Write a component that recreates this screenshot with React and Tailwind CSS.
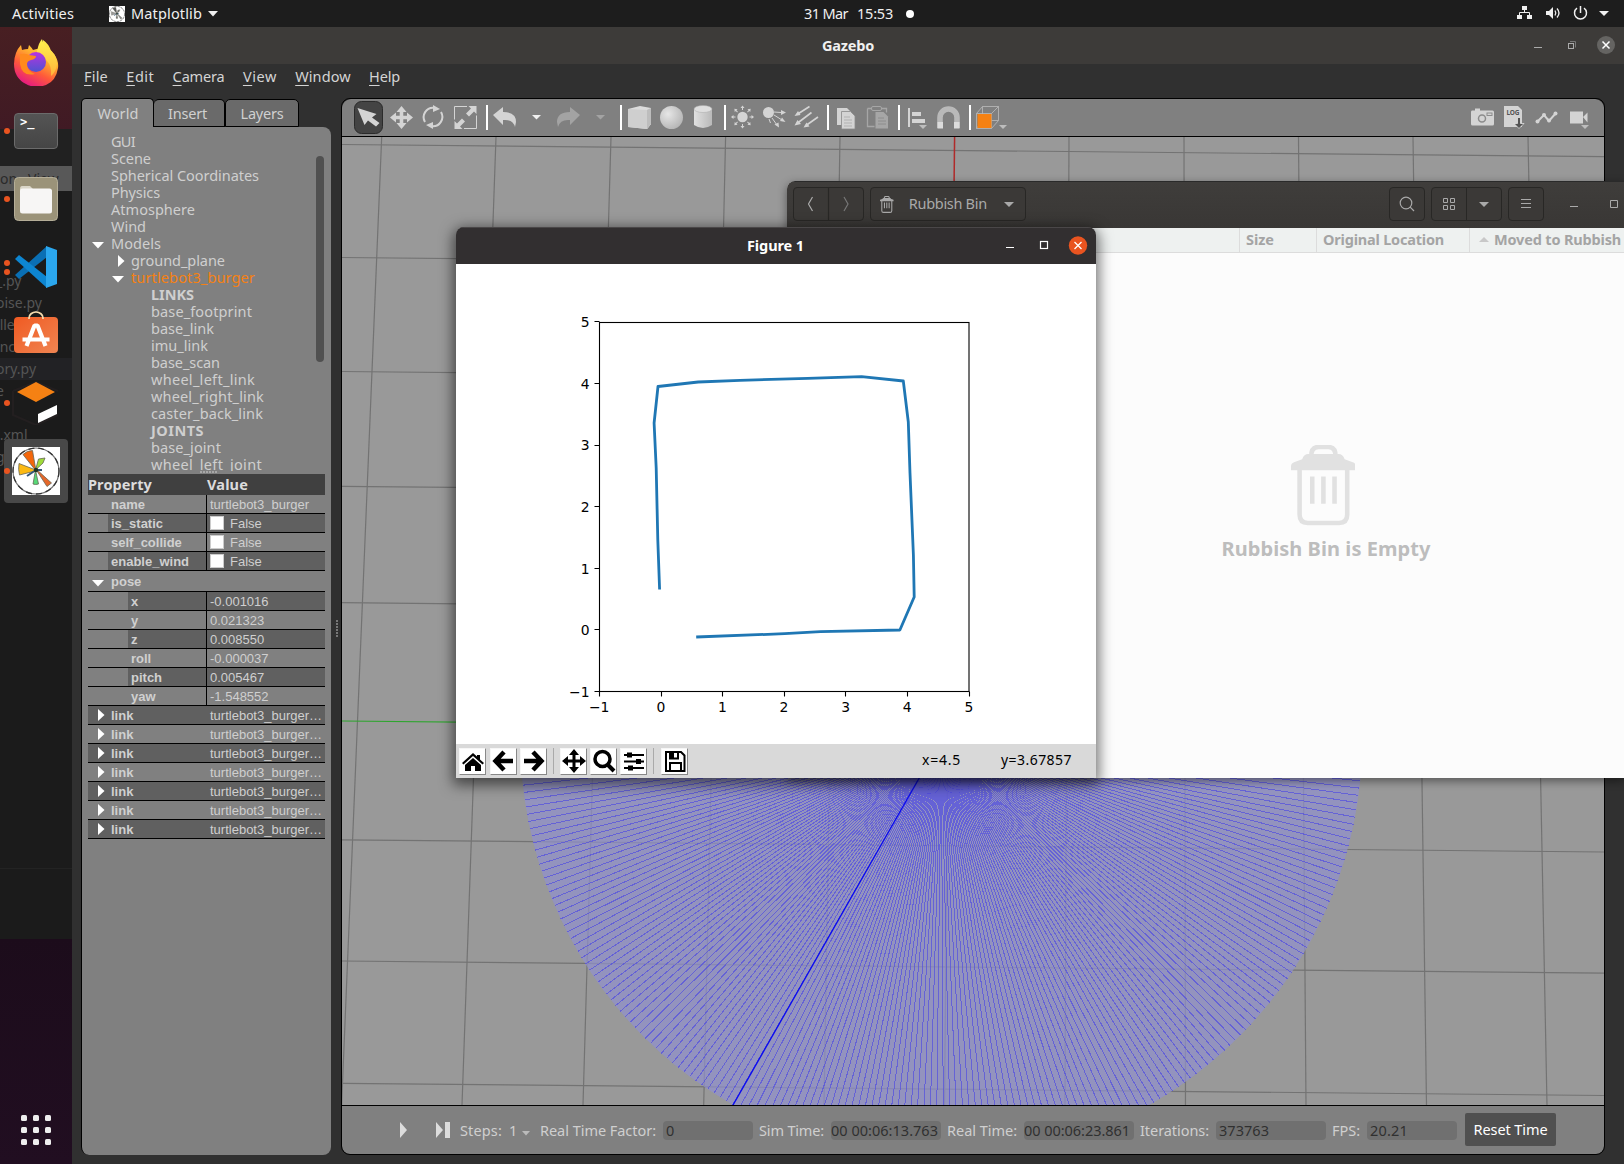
import React, { useLayoutEffect, useRef, useState } from "react";

const UI = "font-['Noto_Sans',sans-serif]";

/* Text whose letter spacing is tuned so that it fills exactly w pixels. */
function Fit({ w, className = "", children }) {
  const ref = useRef(null);
  const [ls, setLs] = useState(0);
  useLayoutEffect(() => {
    const n = ref.current.textContent.length;
    const natural = ref.current.getBoundingClientRect().width - ls * n;
    setLs((w - natural) / n);
  }, [w]);
  return (
    <span ref={ref} className={"inline-block shrink-0 whitespace-pre " + className} style={{ letterSpacing: ls + "px" }}>
      {children}
    </span>
  );
}

/* ---------- top bar ---------- */
function MplWheel({ mono }) {
  const c = mono ? ["#555", "#777", "#888", "#666", "#999"] : ["#f4670b", "#9fdb3a", "#e5672a", "#57d977", "#fcb913"];
  return (
    <g>
      <rect width="48" height="48" fill="#fff" />
      <circle cx="24" cy="24" r="23" fill="#fff" stroke="#777" strokeWidth="1.2" />
      <circle cx="24" cy="24" r="23" fill="none" stroke="#333" strokeWidth="1.3" strokeDasharray="6 4" />
      <path d="M24 24L11 7.500q4-4 9.500-4z" fill={c[0]} stroke="#665" strokeWidth=".8" />
      <path d="M23.500 23L26.500 12l6.500-1-2 5z" fill={c[1]} stroke="#665" strokeWidth=".8" />
      <path d="M23 21L39.500 36l-4.500 3.500z" fill={c[2]} stroke="#665" strokeWidth=".8" />
      <path d="M23.500 23L26.500 37q-3 1-5.500 0z" fill={c[3]} stroke="#665" strokeWidth=".8" />
      <path d="M25 23.500L7 16.500q-1 6 .5 11.500z" fill={c[4]} stroke="#665" strokeWidth=".8" />
      <path d="M24 23l-9 6M24 23l6 0" stroke="#357" strokeWidth="2" />
      <circle cx="24" cy="23" r="2.200" fill="#232" />
    </g>
  );
}

function TopBar() {
  return (
    <div className="h-[27px] shrink-0 bg-[#1d1d1d] flex items-center text-[14.5px] leading-[27px] text-[#f0f0f0]">
      <div className="w-[109px] pl-[12px]"><Fit w={62}>Activities</Fit></div>
      <svg width="16" height="16" viewBox="0 0 48 48"><MplWheel mono /></svg>
      <Fit w={71} className="ml-[6px]">Matplotlib</Fit>
      <svg width="10" height="6" className="ml-[6px]"><path d="M0 0h10L5 5.5z" fill="#f0f0f0" /></svg>
      <div className="ml-[586px] w-[106px] flex items-center">
        <Fit w={44}>31 Mar</Fit><Fit w={36} className="ml-[9px]">15:53</Fit>
        <span className="ml-[13px] size-[8px] shrink-0 rounded-full bg-white" />
      </div>
      <svg width="100" height="27" viewBox="1516 0 100 27" className="ml-auto mr-[8px]" fill="#f0f0f0">
        <path d="M1522 6h5v4h-5zM1517 15h5v4h-5zM1527 15h5v4h-5z" />
        <path d="M1524.500 10v3M1519.500 15v-2.500h10v2.500" fill="none" stroke="#f0f0f0" />
        <path d="M1546 11h3l4-4v12l-4-4h-3z" />
        <path d="M1555 10.500q1.600 2.500 0 5M1557 8.500q4 4.500 0 9" fill="none" stroke="#f0f0f0" strokeWidth="1.300" />
        <path d="M1580.500 6v7M1577 8.200a6 6 0 1 0 7 0" fill="none" stroke="#f0f0f0" strokeWidth="1.500" />
        <path d="M1599 11h10l-5 5z" />
      </svg>
    </div>
  );
}

/* ---------- dock ---------- */
function Firefox() {
  return (
    <svg width="48" height="50" viewBox="0 0 48 50">
      <defs>
        <linearGradient id="ffa" x1=".8" y1=".05" x2=".3" y2="1"><stop offset="0" stopColor="#fff44f" /><stop offset=".35" stopColor="#ffb02e" /><stop offset=".65" stopColor="#ff5a3a" /><stop offset="1" stopColor="#e31587" /></linearGradient>
        <linearGradient id="ffb" x1=".5" y1="0" x2=".5" y2="1"><stop offset="0" stopColor="#b833e1" /><stop offset="1" stopColor="#4f53d0" /></linearGradient>
        <linearGradient id="ffc" x1="0" y1="0" x2="0" y2="1"><stop offset="0" stopColor="#fff44f" /><stop offset="1" stopColor="#ffb43a" /></linearGradient>
      </defs>
      <path d="M4 17q2-5 5-8l1 5q3-1 6-1l1-4q3 3 4 5 6-2 9-1 0-5 1-9 6 4 8 11l3 3q5 7 4 14-2 13-12 17-11 4-20-1Q2 42 2 28q0-6 2-11z" fill="url(#ffa)" />
      <path d="M25 15q2-9 5-12 1 6 6 9 9 6 9 16-1 8-6 12 1-10-4-15-4-6-10-8z" fill="url(#ffc)" />
      <circle cx="24" cy="26" r="10" fill="url(#ffb)" />
      <path d="M8 18q6-1 9 1l7 1q0 3-5 4-4 1-4 4 0 7 8 10Q10 41 8 28z" fill="#ff8a1e" />
    </svg>
  );
}

function DockItem({ h, dots = 0, children }) {
  return (
    <div className={"shrink-0 flex items-center " + h}>
      <div className="w-[12px] flex flex-col items-end gap-[3px]">
        {Array.from({ length: dots }).map((_, i) => <span key={i} className="size-[6px] rounded-full bg-[#e95420] mr-[2px]" />)}
      </div>
      <div className="w-[48px] flex justify-center">{children}</div>
    </div>
  );
}

function Dock() {
  const ghost = "whitespace-pre text-[14px] text-[#555] leading-[22px] h-[22px] -indent-[4px]";
  return (
    <div className="relative w-[72px] shrink-0 h-full bg-[#1b1b1b] overflow-hidden">
      <div className="absolute inset-0 flex flex-col">
        <div className="h-[102px] shrink-0 bg-linear-to-b from-[#481f22] to-[#401a24]" />
        <div className="h-[37px] shrink-0 bg-[#212121]" />
        <div className="h-[25px] shrink-0 bg-[#585858] text-[#2a2a2a] text-[14px] leading-[25px] whitespace-pre">on   View</div>
        <div className="h-[79px] shrink-0" />
        <div className={ghost}>_.py</div>
        <div className={ghost}>oise.py</div>
        <div className={ghost}> ller</div>
        <div className={ghost}> nce</div>
        <div className={ghost + " bg-[#222225]"}>ory.py</div>
        <div className={ghost}>e</div>
        <div className={ghost} />
        <div className={ghost}> .xml</div>
        <div className={ghost}>g</div>
        <div className="h-[401px] shrink-0 border-b border-[#232323]" />
        <div className="h-[70px] shrink-0" />
        <div className="flex-1 bg-linear-to-b from-[#1c0c1b] to-[#210e21]" />
      </div>
      <div className="absolute left-[4px] top-[412px] w-[64px] h-[64px] rounded-[4px] bg-[#484848]" />
      <div className="relative h-full flex flex-col">
        <DockItem h="h-[70px] pb-[3px]"><Firefox /></DockItem>
        <DockItem h="h-[68px]" dots={1}>
          <div className="w-[44px] h-[36px] rounded-[4px] bg-linear-to-b from-[#545454] to-[#454545] border border-[#6b6b6b] font-['DejaVu_Sans_Mono',monospace] font-bold text-[12px] leading-[17px] text-white pl-[5px]">&gt;_</div>
        </DockItem>
        <DockItem h="h-[68px]" dots={1}>
          <svg width="44" height="44"><rect x=".5" y=".5" width="43" height="43" rx="4" fill="#9b9379" stroke="#b5ae98" /><path d="M6 12q0-3 2-3h8l3 3h16v8H6z" fill="#dad6c8" /><rect x="6" y="11.500" width="32" height="25" rx="2.500" fill="#f7f6f5" /></svg>
        </DockItem>
        <DockItem h="h-[68px]" dots={2}>
          <svg width="44" height="44" viewBox="0 0 44 44"><path d="M1 30l4 4L33 12V1z" fill="#0a6fb4" /><path d="M1 14l4-4 28 22v11z" fill="#0d86d2" /><path d="M32 1l11 4v34l-11 4z" fill="#2ba7ee" /></svg>
        </DockItem>
        <DockItem h="h-[68px] pb-[7px]">
          <svg width="44" height="44" viewBox="0 0 44 44"><defs><linearGradient id="swg" x1="0" y1="0" x2="1" y2="1"><stop offset="0" stopColor="#f05a22" /><stop offset="1" stopColor="#f08552" /></linearGradient></defs><rect y="7" width="44" height="36" rx="4" fill="url(#swg)" /><path d="M15 9V8a7 6 0 0 1 14 0v1" fill="none" stroke="#f6dcae" strokeWidth="1.700" /><path d="M12.500 36l8-20.500h3l8 20.500M8.500 29.500h27" fill="none" stroke="#fff" strokeWidth="4.200" strokeLinejoin="bevel" /></svg>
        </DockItem>
        <DockItem h="h-[68px]" dots={1}>
          <svg width="48" height="44" viewBox="0 0 48 44"><path d="M1 10L24 1l22 9M1 10v24l23 10 22-10" fill="none" stroke="#231f20" strokeWidth="2" /><path d="M24 1l19 10-19 10L5 11z" fill="#f58113" /><path d="M26 33l19-9v9L26 42z" fill="#fff" /></svg>
        </DockItem>
        <DockItem h="h-[68px]" dots={1}>
          <svg width="48" height="48"><MplWheel /></svg>
        </DockItem>
        <div className="mt-auto mb-[19px] ml-[21px] grid grid-cols-3 gap-[6px] w-[30px]">
          {Array.from({ length: 9 }).map((_, i) => <span key={i} className="size-[6px] rounded-[1.5px] bg-[#eee]" />)}
        </div>
      </div>
    </div>
  );
}

/* ---------- left panel ---------- */
const tree = [
  [0, "GUI", 24], [0, "Scene", 40], [0, "Spherical Coordinates", 148], [0, "Physics", 49], [0, "Atmosphere", 84], [0, "Wind", 35],
  [0, "Models", 50, "open"], [1, "ground_plane", 94, "closed"], [1, "turtlebot3_burger", 124, "open", true],
  [2, "LINKS", 43], [2, "base_footprint", 101], [2, "base_link", 63], [2, "imu_link", 57], [2, "base_scan", 69],
  [2, "wheel_left_link", 104], [2, "wheel_right_link", 113], [2, "caster_back_link", 112], [2, "JOINTS", 53],
  [2, "base_joint", 70], [2, "wheel_left_joint", 111],
];
const indent = ["w-[29px]", "w-[49px]", "w-[69px]"];

function Tri({ dir }) {
  return dir === "open"
    ? <svg width="12" height="7"><path d="M0 0h12L6 6.500z" fill="#fff" /></svg>
    : <svg width="7" height="12"><path d="M0 0v12l6.500-6z" fill="#fff" /></svg>;
}

function Row({ name, value, lvl = 1, dark, check, arrow, pose }) {
  const bg = dark ? "bg-[#606060]" : "";
  const pad = arrow ? "w-0" : lvl === 1 ? "w-[20px]" : "w-[40px]";
  return (
    <div className={"shrink-0 flex border-b border-black text-[13px] " + (pose ? "h-[21px] leading-[20px]" : "h-[19px] leading-[19px]")}>
      <div className={"shrink-0 " + pad} />
      <div className={"flex-1 flex " + bg}>
        <div className={"flex-1 font-bold text-[#d0d0d0] flex items-center " + (!arrow ? "border-r border-black" : "")}>
          {arrow && <span className={"w-[23px] shrink-0 flex " + (pose ? "pl-[4px] pt-[4px]" : "pl-[10px]")}><Tri dir={arrow} /></span>}
          <span className={arrow ? (pose ? "pt-[1px]" : "") : "pl-[3px]"}>{name}</span>
        </div>
        <div className="w-[118px] shrink-0 flex items-center text-[#cfcfcf] pl-[3px]">
          {check && <span className="size-[14px] bg-white border border-[#ccc] mr-[6px]" />}
          {value}
        </div>
      </div>
    </div>
  );
}

function LeftPanel() {
  return (
    <div className="w-[250px] shrink-0 flex flex-col">
      <div className="h-[29px] shrink-0 flex items-end text-[14.5px] text-[#d0d0d0] text-center">
        <div className="w-[73px] h-[29px] rounded-t-[5px] bg-[#808080] border-t border-l border-r border-black leading-[29px] pl-[1px]"><Fit w={41}>World</Fit></div>
        <div className="w-[71px] h-[28px] rounded-t-[5px] bg-[#6a6a6a] border-t border-r border-b border-black leading-[27px] pr-[3px]"><Fit w={39}>Insert</Fit></div>
        <div className="w-[74px] h-[28px] rounded-t-[5px] bg-[#6a6a6a] border border-black leading-[27px]"><Fit w={43}>Layers</Fit></div>
      </div>
      <div className="flex-1 bg-[#808080] border-l border-black rounded-b-[8px] rounded-tr-[8px] flex flex-col">
        <div className="h-[344px] shrink-0 flex overflow-hidden pt-[6px] text-[14.5px] leading-[17px] text-[#cfcfcf]">
          <div className="flex-1">
            {tree.map(([lvl, t, w, arrow, hot], i) => (
              <div key={i} className="h-[17px] flex items-center">
                <span className={"shrink-0 flex justify-end " + indent[lvl] + (arrow === "open" ? " pr-[7px] pt-[4px]" : " pr-[6px]")}>{arrow && <Tri dir={arrow} />}</span>
                <Fit w={w} className={hot ? "text-[#f58113]" : t === t.toUpperCase() && t !== "GUI" ? "font-bold" : ""}>{t}</Fit>
              </div>
            ))}
          </div>
          <div className="w-[8px] h-[206px] mt-[23px] mr-[7px] rounded-full bg-[#505050]" />
        </div>
        <div className="h-[3px] shrink-0 flex items-start gap-px pl-[118px]">
          {Array.from({ length: 6 }).map((_, i) => <span key={i} className="size-[2px] bg-[#a8a8a8]" />)}
        </div>
        <div className="ml-[6px] w-[237px] flex flex-col font-['Liberation_Sans',sans-serif]">
          <div className={"h-[21px] bg-[#404040] flex text-[14.5px] font-bold leading-[21px] text-[#dcdcdc] " + UI}>
            <div className="w-[119px]"><Fit w={64}>Property</Fit></div>
            <Fit w={41}>Value</Fit>
          </div>
          <Row name="name" value="turtlebot3_burger" />
          <Row name="is_static" value="False" check dark />
          <Row name="self_collide" value="False" check />
          <Row name="enable_wind" value="False" check dark />
          <Row name="pose" arrow="open" pose />
          <Row name="x" value="-0.001016" lvl={2} dark />
          <Row name="y" value="0.021323" lvl={2} />
          <Row name="z" value="0.008550" lvl={2} dark />
          <Row name="roll" value="-0.000037" lvl={2} />
          <Row name="pitch" value="0.005467" lvl={2} dark />
          <Row name="yaw" value="-1.548552" lvl={2} />
          {[0, 1, 2, 3, 4, 5, 6].map((i) => <Row key={i} name="link" value="turtlebot3_burger…" arrow="closed" dark={i % 2 === 0} />)}
        </div>
      </div>
    </div>
  );
}

/* ---------- toolbar ---------- */
function Ic({ x, w, children }) {
  return <svg width={w} height="37" viewBox={`${x} 99 ${w} 37`} className="shrink-0" fill="#d4d4d4" stroke="none">{children}</svg>;
}
const Sep = ({ x, w }) => <Ic x={x} w={w}><rect x={x + Math.floor(w / 2)} y="105" width="2" height="25" fill="#fff" /></Ic>;

function Toolbar() {
  const rays = [0, 45, 90, 135, 180, 225, 270, 315];
  return (
    <div className="h-[38px] shrink-0 bg-[#808080] border-b border-black flex rounded-t-[9px]">
      <Ic x={342} w={43}><rect x="354.500" y="101.500" width="28" height="32" rx="7" fill="#444" stroke="#2b2b2b" /><path d="M357.500 108l19 6-4.500 3.500 7.500 5.500-3.500 3.500-8-6-3.500 4.500z" /></Ic>
      <Ic x={385} w={32}><path d="M401.500 106l5 6h-3.200v3.700h3.700v-3.200l6 5-6 5v-3.200h-3.700v3.700h3.200l-5 6-5-6h3.200v-3.700h-3.700v3.200l-6-5 6-5v3.200h3.700v-3.700h-3.200z" /></Ic>
      <Ic x={417} w={32}><path d="M425 122a9.500 9.500 0 0 1 9-14.300M441 112a9.500 9.500 0 0 1-9 14.300" fill="none" stroke="#d4d4d4" strokeWidth="2" /><path d="M433 105v7l7-3zM433 129v-7l-7 3z" /></Ic>
      <Ic x={449} w={31}><path d="M467 106.500h-12.500v13M464 128.500h12.500v-13" fill="none" stroke="#d4d4d4" /><path d="M476.500 106v8l-2.500-2.500-5 5-3-3 5-5-2.500-2.500zM454.500 129v-8l2.500 2.500 5-5 3 3-5 5 2.500 2.500z" /></Ic>
      <Sep x={480} w={12} />
      <Ic x={492} w={58}><path d="M493 115l10-8v5q13 0 13 10l-1 5q-2-8-12-7v5z" /><path d="M532 115h9l-4.500 4.500z" fill="#f0f0f0" /></Ic>
      <Ic x={550} w={64}><g fill="#a3a3a3"><path d="M580 115l-10-8v5q-13 0-13 10l1 5q2-8 12-7v5z" /><path d="M596 115h9l-4.500 4.500z" /></g></Ic>
      <Sep x={614} w={12} />
      <Ic x={626} w={32}><path d="M628 109l12-3 11 2v16l-4 5-19-2z" fill="#dcdcdc" /><path d="M628 109l19 1 4-2v16l-4 5-19-2z" fill="#cfcfcf" /><path d="M647 110l4-2v16l-4 5z" fill="#bdbdbd" /></Ic>
      <Ic x={658} w={30}>
        <defs><radialGradient id="sph" cx=".35" cy=".35" r=".7"><stop offset="0" stopColor="#e6e6e6" /><stop offset="1" stopColor="#b6b6b6" /></radialGradient><linearGradient id="cyl"><stop offset="0" stopColor="#e0e0e0" /><stop offset="1" stopColor="#b9b9b9" /></linearGradient></defs>
        <circle cx="671.500" cy="117.500" r="11.500" fill="url(#sph)" />
      </Ic>
      <Ic x={688} w={30}><path d="M694 109v16q9 6 18 0v-16z" fill="url(#cyl)" /><ellipse cx="703" cy="109" rx="9" ry="3.500" fill="#dedede" stroke="#aaa" strokeWidth=".5" /></Ic>
      <Sep x={718} w={12} />
      <Ic x={730} w={30}><circle cx="742.500" cy="117" r="5.200" />{rays.map((a) => <path key={a} transform={`rotate(${a} 742.5 117)`} d="M742 110v-2h-1.500l2-2.500 2 2.500h-1.500v2z" />)}</Ic>
      <Ic x={760} w={32}><circle cx="768.500" cy="112.500" r="5.500" /><path d="M774 112l7 .5M774 115l8 5M772 118l5 7M769 119l1.500 4" stroke="#d4d4d4" fill="none" /><path d="M781 110l5 2.500-5 2.500zM780 121l2-3.500 3.500 4.500zM774.500 124.500l4-2 .5 5z" /></Ic>
      <Ic x={792} w={30}><path d="M797 114.500l12.500-8M797 123.500l14.500-11M806 125.500l12-8.500" stroke="#d4d4d4" strokeWidth="1.600" /><path d="M794.500 116l3.500-5 2.500 4zM794.500 125.500l3-5.500 3.500 4zM803.500 127.500l3-5 3 4z" /></Ic>
      <Sep x={822} w={11} />
      <Ic x={833} w={30}><path d="M837 108h10l4 4v13h-14z" /><path d="M841.500 111.500h9l4.500 4.500v13h-13.500z" stroke="#8a8a8a" strokeWidth=".8" /><path d="M844 117h6M844 120h8M844 123h8M844 126h8" stroke="#aaa" strokeWidth=".8" /></Ic>
      <Ic x={863} w={30}><g fill="#a6a6a6"><path d="M867.500 108.500h19v4M867.500 108.500v18h7" fill="none" stroke="#a6a6a6" strokeWidth="1.300" /><rect x="871.500" y="106.500" width="10" height="4" rx="1.500" fill="#808080" stroke="#a6a6a6" /><path d="M875.500 112h8l4.500 4.500v12h-12.500z" /><path d="M878 118h6M878 121h8M878 124h8" stroke="#888" strokeWidth=".8" /></g></Ic>
      <Sep x={893} w={11} />
      <Ic x={904} w={30}><rect x="908" y="108" width="2" height="19" /><rect x="912" y="112" width="9" height="4" /><rect x="912" y="119" width="13" height="4" /><path d="M919 125h8l-4 4z" fill="#bdbdbd" /></Ic>
      <Ic x={934} w={30}><path d="M940 128v-10.500a8 8 0 0 1 17 0V128" fill="none" stroke="#b9b9b9" strokeWidth="5.600" /><path d="M937.500 122h5.500v6.500h-5.500zM954 122h5.500v6.500H954z" fill="#dcdcdc" /></Ic>
      <Sep x={964} w={11} />
      <Ic x={975} w={40}><path d="M976.500 113.500l6-7h16v14l-7 8h-15zM998.500 106.500l-7 7h-15M991.500 113.500v15M982.500 106.500v14h16M982.500 120.500l-6 8" fill="none" stroke="#bbb" strokeWidth=".8" /><rect x="977.500" y="114" width="14" height="14" fill="#f58113" /><path d="M999 125h8l-4 4z" fill="#bdbdbd" /></Ic>
      <div className="flex-1" />
      <svg width="144" height="37" viewBox="1460 99 144 37" fill="#d4d4d4">
        <path d="M1472 110.500h3v-2h5v2h12.500q1.500 0 1.500 1.500v12q0 1.500-1.500 1.500h-20q-1.500 0-1.500-1.500v-12q0-1.500 1-1.500z" /><circle cx="1482" cy="118.500" r="3.500" fill="none" stroke="#8c8c8c" strokeWidth="1.500" /><rect x="1487" y="113" width="5" height="2.500" fill="none" stroke="#8c8c8c" />
        <path d="M1504 106h14l4 4v17h-18z" /><text x="1506.500" y="115" fontSize="6.500" fontWeight="700" fill="#555" textLength="13" className={UI}>LOG</text>
        <path d="M1517.500 117.500h3v6h3.500l-5 5-5-5h3.500z" fill="#555" stroke="#eee" strokeWidth=".7" />
        <path d="M1537 122l7-7 5 6 7-8" fill="none" stroke="#d4d4d4" strokeWidth="2" /><circle cx="1537.500" cy="121.500" r="2" /><circle cx="1544" cy="115" r="2" /><circle cx="1549" cy="120.500" r="2" /><circle cx="1555.500" cy="113.500" r="2" />
        <path d="M1570 111.500h13v12h-13zM1583 117l4.500-4.500v10z" /><path d="M1581 125h8l-4 4z" fill="#bdbdbd" />
      </svg>
    </div>
  );
}

/* ---------- 3D scene ---------- */
const CX = 941.3, CY = 739, R = 421;
function Scene() {
  const hs = [144.5, 257.5, 371.5, 486.3, 602.7, 839.8, 961, 1083.3];
  const vs = [[381.7, 341.6], [496, 462], [611, 583], [725.6, 703.7], [840, 824], [1069, 1065], [1184, 1185.5], [1298.5, 1306], [1413, 1426.5], [1528, 1547]];
  const pts = Array.from({ length: 360 }, (_, i) => {
    const a = ((i + 0.3) * Math.PI) / 180;
    return [CX + R * Math.sin(a), CY + R * Math.cos(a)];
  });
  return (
    <svg width="1262" height="968" viewBox="342 137 1262 968" className="block shrink-0 bg-[#999]">
      <g stroke="#737373" strokeWidth="1.2">
        {hs.map((y) => <line key={y} x1="341" x2="1604" y1={y} y2={y + 12.2} />)}
        {vs.map(([a, b]) => <line key={a} x1={a} x2={b} y1="137" y2="1105" />)}
      </g>
      <line x1="341" x2="948" y1="721" y2="726.500" stroke="#2fa52f" strokeWidth="1.200" />
      <line x1="954.600" x2="948" y1="137" y2="726" stroke="#b02a2a" strokeWidth="1.500" />
      <line x1="948" x2="944.500" y1="726" y2="1106" stroke="#737373" strokeWidth="1.200" />
      <circle cx={CX} cy={CY} r={R} fill="#9090cc" fillOpacity=".72" />
      <g stroke="#4f4be2" strokeOpacity=".68" strokeWidth="1" shapeRendering="crispEdges">
        {pts.map(([x, y], i) => y > 770 && <line key={i} x1={CX} y1={CY} x2={x} y2={y} />)}
      </g>
      <line x1="942" y1="738" x2="732.500" y2="1106" stroke="#0a0af0" strokeWidth="1.300" />
    </svg>
  );
}

function Field({ w, tw, pl = "pl-[3px]", children }) {
  return <div className={"h-[19px] shrink-0 rounded-[4px] bg-[#707070] text-[#303030] leading-[19px] " + w + " " + pl}><Fit w={tw}>{children}</Fit></div>;
}

function StatusBar() {
  return (
    <div className="flex-1 bg-[#808080] border-t border-black rounded-b-[8px] flex items-center text-[14.5px] leading-[19px] text-[#cfcfcf]">
      <svg width="118" height="18" className="shrink-0" fill="#dcdcdc"><path d="M58 1v16l7-8zM94 1v16l7-8zM103 1h5v16h-5z" /></svg>
      <Fit w={42}>Steps:</Fit><span className="ml-[7px] w-[14px]">1</span>
      <svg width="8" height="5" className="mt-[6px] -ml-px"><path d="M0 0h8L4 4.500z" fill="#bbb" /></svg>
      <Fit w={116} className="ml-[10px]">Real Time Factor:</Fit><span className="w-[7px]" />
      <Field w="w-[90px]" tw={8}>0</Field>
      <Fit w={65} className="ml-[6px] mr-[7px]">Sim Time:</Fit>
      <Field w="w-[110px]" tw={107} pl="pl-0">00 00:06:13.763</Field>
      <Fit w={70} className="ml-[6px] mr-[7px]">Real Time:</Fit>
      <Field w="w-[110px]" tw={106} pl="pl-0">00 00:06:23.861</Field>
      <Fit w={69} className="ml-[6px] mr-[7px]">Iterations:</Fit>
      <Field w="w-[110px]" tw={50}>373763</Field>
      <Fit w={28} className="ml-[6px] mr-[7px]">FPS:</Fit>
      <Field w="w-[90px]" tw={38}>20.21</Field>
      <div className="ml-[8px] mb-px w-[91px] h-[33px] rounded-[2px] bg-[#505050] text-white flex items-center justify-center"><Fit w={74}>Reset Time</Fit></div>
    </div>
  );
}

const menus = [["F", "ile", 24], ["E", "dit", 28], ["C", "amera", 52], ["V", "iew", 34], ["W", "indow", 55.5], ["H", "elp", 31]];

function Gazebo() {
  return (
    <div className="flex-1 h-full bg-[#303030] flex flex-col">
      <div className="h-[37px] shrink-0 bg-[#3d3b39] flex items-center">
        <div className="flex-1 text-center text-[14.5px] font-bold text-[#f0f0f0] leading-[37px]"><Fit w={52}>Gazebo</Fit></div>
        <svg width="100" height="37" viewBox="1524 27 100 37" className="-ml-[100px]">
          <path d="M1534 47.500h8" stroke="#aaa" /><rect x="1568.500" y="43.500" width="5" height="5" fill="none" stroke="#aaa" /><path d="M1570 41.500h5.500v6" fill="none" stroke="#777" />
          <circle cx="1606" cy="45" r="9" fill="#656462" /><path d="M1602.500 41.500l7 7m0-7l-7 7" stroke="#fff" strokeWidth="1.500" />
        </svg>
      </div>
      <div className="h-[34px] shrink-0 flex items-center pl-[12px] gap-[18.300px] text-[14.5px] leading-[20px] pb-[10px] text-[#d4d4d4]">
        {menus.map(([a, b, w]) => <Fit key={b} w={w}><span className="underline decoration-1 underline-offset-[3px]">{a}</span>{b}</Fit>)}
      </div>
      <div className="flex-1 flex pl-[9px] pb-[9px]">
        <LeftPanel />
        <div className="w-[10px] shrink-0 flex items-center justify-center pt-[4px]">
          <div className="flex flex-col gap-px ml-[2px]">{Array.from({ length: 6 }).map((_, i) => <span key={i} className="size-[2px] bg-[#777]" />)}</div>
        </div>
        <div className="w-[1264px] shrink-0 border border-black rounded-[9px] flex flex-col overflow-hidden">
          <Toolbar />
          <Scene />
          <StatusBar />
        </div>
      </div>
    </div>
  );
}

/* ---------- file manager ---------- */
const btn = "h-[34px] shrink-0 rounded-[4px] border border-[#282725] bg-[#3b3937] flex items-center justify-center";
function Bin({ size, color, sw }) {
  return (
    <svg width={size * 0.8} height={size} viewBox="0 0 64 80" fill="none" stroke={color}>
      <path d="M8.500 24v45q0 8 8 8h31q8 0 8-8V24M21 31v27M32 31v27M43 31v27" strokeWidth={sw} /><path d="M0 25v-4q0-3 3-4l8-3q2-5 6-5h30q4 0 6 5l8 3q3 1 3 4v4z" fill={color} stroke="none" /><path d="M20 11q0-9 7-9h10q7 0 7 9" strokeWidth={sw} />
    </svg>
  );
}

function Files() {
  return (
    <div className="absolute left-[787px] top-[181px] w-[837px] h-[597px] overflow-hidden rounded-tl-[8px] bg-[#fcfcfc] flex flex-col shadow-[0_3px_10px_rgba(0,0,0,0.45)]">
      <div className="h-[47px] shrink-0 bg-linear-to-b from-[#3f3d3b] to-[#393735] border-t border-[#2a2a2a] flex items-center pl-[6px] pb-[2px]">
        <div className={btn + " w-[71px]"}>
          <svg width="69" height="32" fill="none" strokeWidth="1.200"><path d="M18.500 9l-4 7 4 7" stroke="#aaa" /><path d="M50 9l4 7-4 7" stroke="#777" /><path d="M34.500 0v32" stroke="#282725" /></svg>
        </div>
        <div className={btn + " w-[156px] ml-[6px] pr-[2px] text-[14.5px] text-[#a9a9a9] gap-[17px]"}>
          <Bin size={17} color="#a9a9a9" sw={5} /><Fit w={78} className="-ml-[2px]">Rubbish Bin</Fit>
          <svg width="10" height="5"><path d="M0 0h10L5 5z" fill="#a9a9a9" /></svg>
        </div>
        <div className="flex-1" />
        <div className={btn + " w-[36px]"}><svg width="16" height="16" fill="none" stroke="#a9a9a9" strokeWidth="1.200"><circle cx="7" cy="7" r="5.800" /><path d="M11.200 11.200L15 15" /></svg></div>
        <div className={btn + " w-[71px] ml-[6px]"}>
          <svg width="69" height="32" fill="none" stroke="#a9a9a9"><path d="M11.500 10.500h4v4h-4zM18.500 10.500h4v4h-4zM11.500 17.500h4v4h-4zM18.500 17.500h4v4h-4z" /><path d="M34.500 0v32" stroke="#282725" /><path d="M47 14h10l-5 5z" fill="#a9a9a9" stroke="none" /></svg>
        </div>
        <div className={btn + " w-[36px] ml-[6px]"}><svg width="10" height="10" stroke="#a9a9a9"><path d="M0 .5h10M0 4.500h10M0 8.500h10" /></svg></div>
        <svg width="80" height="34" viewBox="1544 187 80 34" fill="none" stroke="#aaa" className="shrink-0"><path d="M1570 206.500h8M1610.500 200.500h7v7h-7z" /></svg>
      </div>
      <div className="h-[25px] shrink-0 bg-[#eef1f0] border-b border-[#dcdcdc] flex text-[14.5px] leading-[23px] font-bold text-[#a4a4a4]">
        <div className="w-[453px] shrink-0 border-r border-[#dcdcdc]" />
        <div className="w-[77px] shrink-0 border-r border-[#dcdcdc] pl-[6px]"><Fit w={28}>Size</Fit></div>
        <div className="w-[153px] shrink-0 border-r border-[#dcdcdc] pl-[6px]"><Fit w={121}>Original Location</Fit></div>
        <div className="flex items-center pl-[9px] gap-[5px] h-[23px]"><svg width="10" height="5"><path d="M0 5h10L5 0z" fill="#c8c8c8" /></svg><Fit w={127}>Moved to Rubbish</Fit></div>
      </div>
      <div className="flex-1 pl-[239px] pb-[23px] flex flex-col items-center justify-center gap-[9px] text-[#bdbdbd]">
        <div className="pr-[4px]"><Bin size={81} color="#e1e1e1" sw={4.5} /></div>
        <Fit w={209} className="text-[20px] leading-[28px] font-bold ml-[2px]">Rubbish Bin is Empty</Fit>
      </div>
    </div>
  );
}

/* ---------- matplotlib window ---------- */
const path = [[696.2, 637], [784.6, 633.700], [820.4, 631.7], [899.9, 630], [914.2, 597], [913.4, 555], [910, 473], [908.3, 422], [903.3, 381], [861.6, 376.7], [807.7, 378.3], [740, 380.3], [698.2, 382], [658, 386.5], [654.1, 423], [656.2, 468], [657.8, 540], [659.6, 589.5]];
function Plot() {
  const k = [-1, 0, 1, 2, 3, 4, 5];
  const lab = (n) => String(n).replace("-", "−");
  return (
    <svg width="640" height="480" viewBox="456 264 640 480" className="block shrink-0 bg-white font-['DejaVu_Sans',sans-serif]" fontSize="13.900">
      <rect x="599.500" y="322.500" width="369.500" height="369" fill="none" stroke="#000" strokeWidth="1.100" />
      {k.map((n, i) => (
        <g key={n}>
          <path d={`M${Math.round(599 + i * 61.6) + 0.5} 691.5v5M599.5 ${Math.round(691 - i * 61.6) + 0.5}h-5`} stroke="#000" strokeWidth="1.1" />
          <text x={599.2 + i * 61.6} y="712" textAnchor="middle">{lab(n)}</text>
          <text x="589.500" y={696.7 - i * 61.6} textAnchor="end">{lab(n)}</text>
        </g>
      ))}
      <polyline points={path.map((p) => p.join()).join(" ")} fill="none" stroke="#1f77b4" strokeWidth="2.8" strokeLinejoin="round" />
    </svg>
  );
}

function TB({ children, ml = "ml-[3px]" }) {
  return <div className={"size-[27px] shrink-0 bg-white border border-[#f6f6f6] border-r-[#888] border-b-[#888] flex items-center justify-center " + ml}><svg width="24" height="24" viewBox="0 0 24 24">{children}</svg></div>;
}

function Figure() {
  return (
    <div className="absolute left-[456px] top-[227px] w-[640px] h-[551px] rounded-t-[8px] overflow-hidden flex flex-col">
      <div className="h-[37px] shrink-0 bg-[#322f30] border-t border-[#4a4748] flex items-center text-[14.5px] font-bold text-white">
        <div className="w-[94px] shrink-0" />
        <div className="flex-1 text-center"><Fit w={57}>Figure 1</Fit></div>
        <svg width="95" height="36" viewBox="1001 228 95 36" fill="none" stroke="#fff"><path d="M1006 247.500h8" strokeWidth="1.200" /><rect x="1040.500" y="241.500" width="7" height="7" strokeWidth="1.200" /><circle cx="1078" cy="245.500" r="9.200" fill="#e95420" stroke="none" /><path d="M1074.500 242l7 7m0-7l-7 7" strokeWidth="1.300" /></svg>
      </div>
      <Plot />
      <div className="h-[34px] shrink-0 bg-[#d9d9d9] flex items-center">
        <TB><path d="M12 4L1 14l1.500 1.500L12 7l9.500 8.500L23 14l-4-3.600V6h-3v1.600zM4 16l8-7 8 7v6h-6v-5h-4v5H4z" /></TB>
        <TB ml="ml-[4px]"><path d="M21 12H5M12 3l-8.500 9 8.500 9" fill="none" stroke="#000" strokeWidth="4.500" /></TB>
        <TB><path d="M2 12h16M11 3l8.500 9-8.500 9" fill="none" stroke="#000" strokeWidth="4.500" /></TB>
        <span className="ml-[6px] w-px h-[26px] bg-[#aaa]" />
        <TB ml="ml-[6px]"><path d="M12 2v20M2 12h20" stroke="#000" strokeWidth="3" /><path d="M12 0l5 6H7zM12 24l5-6H7zM0 12l6-5v10zM24 12l-6-5v10z" /></TB>
        <TB><circle cx="10.500" cy="10" r="7.500" fill="none" stroke="#000" strokeWidth="3.500" /><path d="M16 16l6 6" stroke="#000" strokeWidth="4" /></TB>
        <TB><path d="M2 6h20M2 12.500h20M2 19h20" stroke="#000" strokeWidth="2" /><path d="M5 3.500h5v5H5zM14 10h5v5h-5zM6 16.500h5v5H6z" /></TB>
        <span className="ml-[6px] w-px h-[26px] bg-[#aaa]" />
        <TB ml="ml-[7px]"><path d="M3 3h15l3.500 3.500V22H3zM7 22v-8h11v8M7 3v6.500h8V3" fill="none" stroke="#000" strokeWidth="2" /><path d="M7 3h4v6H7z" /></TB>
        <div className="flex-1" />
        <div className="font-['Noto_Sans',sans-serif] text-[14px] text-black flex pr-[24px] pb-[3px]"><Fit w={39}>x=4.5</Fit><Fit w={71} className="ml-[40px]">y=3.67857</Fit></div>
      </div>
    </div>
  );
}

export default function App() {
  return (
    <div className={"relative w-[1624px] h-[1164px] overflow-hidden flex flex-col bg-[#1b1b1b] " + UI}>
      <TopBar />
      <div className="flex-1 min-h-0 flex">
        <Dock />
        <Gazebo />
      </div>
      <Files />
      <div className="absolute left-[456px] top-[227px] w-[640px] h-[551px] rounded-t-[8px] shadow-[0_4px_14px_3px_rgba(0,0,0,0.55)]" />
      <Figure />
    </div>
  );
}
